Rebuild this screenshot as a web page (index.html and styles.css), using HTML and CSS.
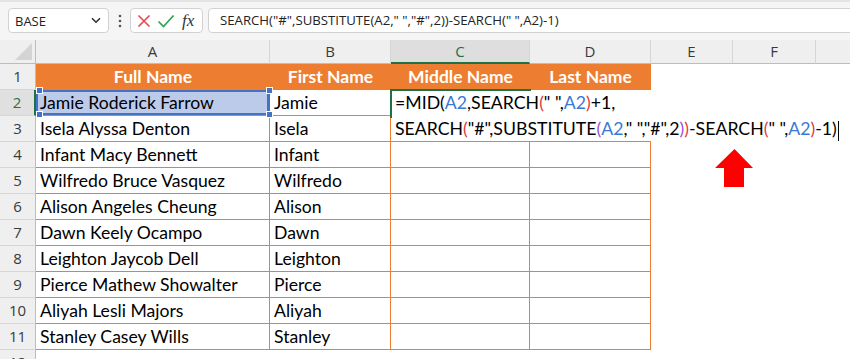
FILE: index.html
```html
<!DOCTYPE html>
<html>
<head>
<meta charset="utf-8">
<link rel="stylesheet" href="styles.css">
</head>
<body>
<div class="toolbar">
  <div class="namebox">
    <span class="nb-text">BASE</span>
    <svg class="chev" width="10" height="7" viewBox="0 0 10 7"><path d="M1 1.2 L5 5.2 L9 1.2" fill="none" stroke="#333" stroke-width="1.6"/></svg>
  </div>
  <div class="dots">
    <svg width="4" height="14" viewBox="0 0 4 14"><circle cx="2" cy="2" r="1.3" fill="#555"/><circle cx="2" cy="7" r="1.3" fill="#555"/><circle cx="2" cy="12" r="1.3" fill="#555"/></svg>
  </div>
  <div class="fxbox">
    <svg class="ico" width="14" height="14" viewBox="0 0 14 14"><path d="M1.5 1.5 L12.5 12.5 M12.5 1.5 L1.5 12.5" stroke="#e5484d" stroke-width="1.6" fill="none"/></svg>
    <svg class="ico" width="18" height="14" viewBox="0 0 18 14"><path d="M1.5 7.5 L6.5 12.5 L16.5 1.5" stroke="#2ea44f" stroke-width="1.7" fill="none"/></svg>
    <span class="fx">fx</span>
  </div>
  <div class="formula">SEARCH("#",SUBSTITUTE(A2," ","#",2))-SEARCH(" ",A2)-1)</div>
</div>

<div class="sheet">
  <div class="corner"><span class="tri"></span></div>
  <div class="ch">A</div>
  <div class="ch">B</div>
  <div class="ch sel">C</div>
  <div class="ch">D</div>
  <div class="ch">E</div>
  <div class="ch">F</div>
  <div class="ch last"></div>

  <div class="rh">1</div>
  <div class="th">Full Name</div>
  <div class="th">First Name</div>
  <div class="th">Middle Name</div>
  <div class="th">Last Name</div>
  <div class="c"></div><div class="c"></div><div class="c"></div>

  <div class="rh sel">2</div>
  <div class="t ref">Jamie Roderick Farrow<span class="h h1"></span><span class="h h2"></span><span class="h h3"></span><span class="h h4"></span></div>
  <div class="t">Jamie</div>
  <div class="t"></div>
  <div class="t"></div>
  <div class="c"></div><div class="c"></div><div class="c"></div>

  <div class="rh">3</div>
  <div class="t">Isela Alyssa Denton</div>
  <div class="t">Isela</div>
  <div class="t"></div>
  <div class="t"></div>
  <div class="c"></div><div class="c"></div><div class="c"></div>

  <div class="rh">4</div>
  <div class="t">Infant Macy Bennett</div>
  <div class="t">Infant</div>
  <div class="t"></div>
  <div class="t"></div>
  <div class="c"></div><div class="c"></div><div class="c"></div>

  <div class="rh">5</div>
  <div class="t">Wilfredo Bruce Vasquez</div>
  <div class="t">Wilfredo</div>
  <div class="t"></div>
  <div class="t"></div>
  <div class="c"></div><div class="c"></div><div class="c"></div>

  <div class="rh">6</div>
  <div class="t">Alison Angeles Cheung</div>
  <div class="t">Alison</div>
  <div class="t"></div>
  <div class="t"></div>
  <div class="c"></div><div class="c"></div><div class="c"></div>

  <div class="rh">7</div>
  <div class="t">Dawn Keely Ocampo</div>
  <div class="t">Dawn</div>
  <div class="t"></div>
  <div class="t"></div>
  <div class="c"></div><div class="c"></div><div class="c"></div>

  <div class="rh">8</div>
  <div class="t">Leighton Jaycob Dell</div>
  <div class="t">Leighton</div>
  <div class="t"></div>
  <div class="t"></div>
  <div class="c"></div><div class="c"></div><div class="c"></div>

  <div class="rh">9</div>
  <div class="t">Pierce Mathew Showalter</div>
  <div class="t">Pierce</div>
  <div class="t"></div>
  <div class="t"></div>
  <div class="c"></div><div class="c"></div><div class="c"></div>

  <div class="rh">10</div>
  <div class="t">Aliyah Lesli Majors</div>
  <div class="t">Aliyah</div>
  <div class="t"></div>
  <div class="t"></div>
  <div class="c"></div><div class="c"></div><div class="c"></div>

  <div class="rh">11</div>
  <div class="t">Stanley Casey Wills</div>
  <div class="t">Stanley</div>
  <div class="t"></div>
  <div class="t"></div>
  <div class="c"></div><div class="c"></div><div class="c"></div>

  <div class="rh">12</div>
  <div class="c"></div><div class="c"></div><div class="c"></div><div class="c"></div><div class="c"></div><div class="c"></div><div class="c"></div>

  <div class="editor">
    <div class="eline">=MID(<span class="b">A2</span>,SEARCH<span class="r">(</span>" ",<span class="b">A2</span><span class="r">)</span>+1,</div>
    <div class="eline">SEARCH<span class="r">(</span>"#",SUBSTITUTE<span class="p">(</span><span class="b">A2</span>," ","#",2<span class="p">)</span><span class="r">)</span>-SEARCH<span class="r">(</span>" ",<span class="b">A2</span><span class="r">)</span>-1)<span class="caret"></span></div>
  </div>

  <svg class="arrow" width="40" height="40" viewBox="0 0 40 40"><path d="M19.5 0 L38 19 L29 19 L29 38 L9 38 L9 19 L0 19 Z" fill="#ff0000"/></svg>
</div>
</body>
</html>
```

FILE: styles.css
```css
html, body {
  margin: 0;
  padding: 0;
  background: #ffffff;
  overflow: hidden;
}

body {
  width: 850px;
  height: 359px;
  font-family: "Open Sans", "Noto Sans", sans-serif;
}

.toolbar {
  height: 40px;
  box-sizing: border-box;
  background: #f5f5f5;
  border-top: 2px solid #e4e4e4;
  display: flex;
  align-items: center;
  padding: 4px 0 5px 8px;
  overflow: hidden;
}

.namebox {
  width: 101px;
  height: 25px;
  box-sizing: border-box;
  background: #fff;
  border: 1px solid #d2d2d2;
  border-radius: 4px;
  display: flex;
  align-items: center;
  justify-content: space-between;
  padding: 0 7px 0 6px;
  font-size: 13px;
  color: #222;
  flex: none;
}

.dots {
  width: 21px;
  flex: none;
  display: flex;
  justify-content: center;
  align-items: center;
}

.fxbox {
  width: 73px;
  height: 25px;
  box-sizing: border-box;
  background: #fff;
  border: 1px solid #d2d2d2;
  border-radius: 4px;
  display: flex;
  align-items: center;
  padding: 0 4px 0 6px;
  gap: 6px;
  flex: none;
}

.fx {
  font-family: "Liberation Serif", serif;
  font-style: italic;
  font-size: 17px;
  color: #333;
  line-height: 1;
  margin-left: 1px;
}

.formula {
  margin-left: 5px;
  flex: none;
  width: 660px;
  height: 25px;
  box-sizing: border-box;
  background: #fff;
  border: 1px solid #d2d2d2;
  border-radius: 4px;
  padding-left: 11px;
  font-size: 13.2px;
  line-height: 23px;
  color: #222;
  white-space: nowrap;
}

.sheet {
  position: relative;
  display: grid;
  grid-template-columns: 36px 234px 121px 139px 121px 82px 83px 1fr;
  grid-template-rows: 24px repeat(12, 26px);
}

.corner {
  background: #efefef;
  border-right: 1px solid #bdbdbd;
  border-bottom: 1px solid #bdbdbd;
  box-sizing: border-box;
  position: relative;
}

.tri {
  position: absolute;
  right: 3px;
  bottom: 3px;
  width: 17px;
  height: 17px;
  background: #d4d4d4;
  clip-path: polygon(100% 0, 100% 100%, 0 100%);
}

.ch {
  background: #efefef;
  box-sizing: border-box;
  border-right: 1px solid #d6d6d6;
  border-bottom: 1px solid #bdbdbd;
  text-align: center;
  font-size: 15px;
  line-height: 23px;
  color: #3a3a3a;
}

.ch.sel {
  background: #dedede;
  color: #1e7145;
  border-bottom: 2px solid #1e7145;
}

.ch.last {
  border-right: none;
}

.rh {
  background: #efefef;
  box-sizing: border-box;
  border-right: 1px solid #bdbdbd;
  border-bottom: 1px solid #d6d6d6;
  text-align: center;
  font-size: 15px;
  line-height: 25px;
  color: #3a3a3a;
}

.rh.sel {
  background: #e0e0e0;
  color: #1e7145;
  border-right: 2px solid #1e7145;
}

.c {
  background: #fff;
}

.th {
  background: #ed7d31;
  color: #fff;
  font-family: "Lato", "Open Sans", sans-serif;
  font-weight: bold;
  font-size: 17.5px;
  text-align: center;
  line-height: 26px;
  white-space: nowrap;
}

.t {
  box-sizing: border-box;
  border-right: 1px solid #ed7d31;
  border-bottom: 1px solid #ed7d31;
  font-family: "Lato", "Open Sans", sans-serif;
  font-size: 17.6px;
  line-height: 25px;
  padding-left: 4px;
  color: #000;
  white-space: nowrap;
}

.ref {
  position: relative;
  background: #bccbea;
  box-shadow: inset 0 0 0 2px #4472c4;
  border-right-color: #4472c4;
}

.h {
  position: absolute;
  width: 5px;
  height: 5px;
  background: #4472c4;
  border: 1px solid #fff;
}
.h1 { left: 0; top: -3px; }
.h2 { right: -4px; top: -3px; }
.h3 { left: 0; bottom: -3px; }
.h4 { right: -4px; bottom: -3px; }

.editor {
  position: absolute;
  left: 391px;
  top: 50px;
  width: 458px;
  height: 51px;
  background: #fff;
  font-family: "Lato", "Open Sans", sans-serif;
  font-size: 17.7px;
  color: #000;
  white-space: nowrap;
}

.editor::before {
  content: "";
  position: absolute;
  left: -1px;
  top: -1px;
  width: 139px;
  height: 27px;
  border-top: 2px solid #1e7145;
  border-left: 2px solid #1e7145;
}

.eline {
  height: 26px;
  line-height: 26px;
  padding-left: 4px;
}

.b { color: #3a78d6; }
.r { color: #e0383e; }
.p { color: #9e4fcf; }

.caret {
  display: inline-block;
  width: 1px;
  height: 20px;
  background: #000;
  vertical-align: middle;
  margin-left: 1px;
}

.arrow {
  position: absolute;
  left: 715px;
  top: 109px;
}
```
